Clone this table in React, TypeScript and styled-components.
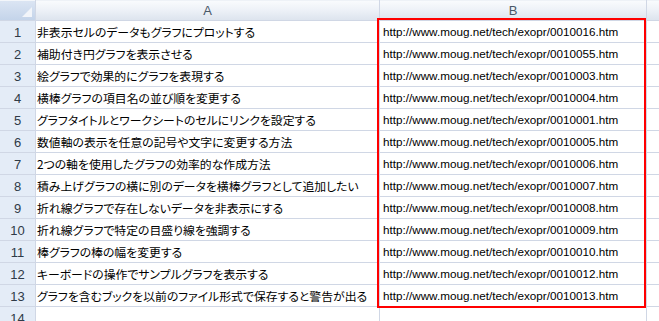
import React from "react";
import styled, { createGlobalStyle } from "styled-components";

const Global = createGlobalStyle`
  html, body { margin: 0; padding: 0; background: #ffffff; overflow: hidden; }
  body { width: 659px; height: 321px; }
`;

const rows: [string, string][] = [
  ["非表示セルのデータもグラフにプロットする", "0010016"],
  ["補助付き円グラフを表示させる", "0010055"],
  ["絵グラフで効果的にグラフを表現する", "0010003"],
  ["横棒グラフの項目名の並び順を変更する", "0010004"],
  ["グラフタイトルとワークシートのセルにリンクを設定する", "0010001"],
  ["数値軸の表示を任意の記号や文字に変更する方法", "0010005"],
  ["2つの軸を使用したグラフの効率的な作成方法", "0010006"],
  ["積み上げグラフの横に別のデータを横棒グラフとして追加したい", "0010007"],
  ["折れ線グラフで存在しないデータを非表示にする", "0010008"],
  ["折れ線グラフで特定の目盛り線を強調する", "0010009"],
  ["棒グラフの棒の幅を変更する", "0010010"],
  ["キーボードの操作でサンプルグラフを表示する", "0010012"],
  ["グラフを含むブックを以前のファイル形式で保存すると警告が出る", "0010013"],
];

const Sheet = styled.div`
  position: relative;
  width: 659px;
  height: 321px;
  overflow: hidden;
  background: #ffffff;
`;

const Grid = styled.div`
  display: grid;
  grid-template-columns: 35px 343px 266px 1fr;
  grid-auto-rows: 21px;
  grid-template-rows: 20px;
  gap: 1px;
  background: #d0d7e5;
  width: 659px;
`;

const Corner = styled.div`
  position: relative;
  background: linear-gradient(#dbe5f3, #c4d4ea);
  border-top: 1px solid #f3f6fa;
  box-sizing: border-box;
  &::after {
    content: "";
    position: absolute;
    right: 3px;
    bottom: 3px;
    width: 0;
    height: 0;
    border-left: 10px solid transparent;
    border-bottom: 10px solid #f2f5fa;
  }
`;

const ColHead = styled.div`
  background: linear-gradient(#f9fbfd 0%, #eef2f8 45%, #dde4ee 100%);
  border-top: 1px solid #eef2f7;
  box-sizing: border-box;
  display: flex;
  align-items: flex-end;
  justify-content: center;
  padding-bottom: 1px;
  font-family: "Liberation Sans", Arial, sans-serif;
  font-size: 13px;
  color: #4a5868;
  line-height: 16px;
`;

const RowHead = styled.div`
  background: #e4ecf7;
  display: flex;
  align-items: flex-end;
  justify-content: center;
  font-family: "Liberation Sans", Arial, sans-serif;
  font-size: 13px;
  line-height: 16px;
  color: #2f3a47;
  padding-bottom: 1px;
`;

const Cell = styled.div<{ $kind?: "jp" | "url" }>`
  background: #ffffff;
  display: flex;
  align-items: center;
  white-space: nowrap;
  overflow: hidden;
  color: #000000;
  padding-left: ${(p) => (p.$kind === "url" ? "3px" : "1px")};
  font-family: ${(p) =>
    p.$kind === "url"
      ? '"Liberation Sans", Arial, sans-serif'
      : '"Noto Sans CJK JP", "Liberation Sans", sans-serif'};
  font-size: ${(p) => (p.$kind === "url" ? "11.7px" : "11.85px")};
  font-feature-settings: "palt";
`;

const Highlight = styled.div`
  position: absolute;
  left: 377px;
  top: 18px;
  width: 269px;
  height: 290px;
  border: 2px solid #ff0000;
  box-sizing: border-box;
  pointer-events: none;
`;

export default function App() {
  return (
    <>
      <Global />
      <Sheet>
        <Grid>
          <Corner />
          <ColHead>A</ColHead>
          <ColHead>B</ColHead>
          <ColHead />
          {rows.map(([title, id], i) => (
            <React.Fragment key={id}>
              <RowHead>{i + 1}</RowHead>
              <Cell $kind="jp">{title}</Cell>
              <Cell $kind="url">{`http://www.moug.net/tech/exopr/${id}.htm`}</Cell>
              <Cell />
            </React.Fragment>
          ))}
          <RowHead>14</RowHead>
          <Cell />
          <Cell />
          <Cell />
        </Grid>
        <Highlight />
      </Sheet>
    </>
  );
}
